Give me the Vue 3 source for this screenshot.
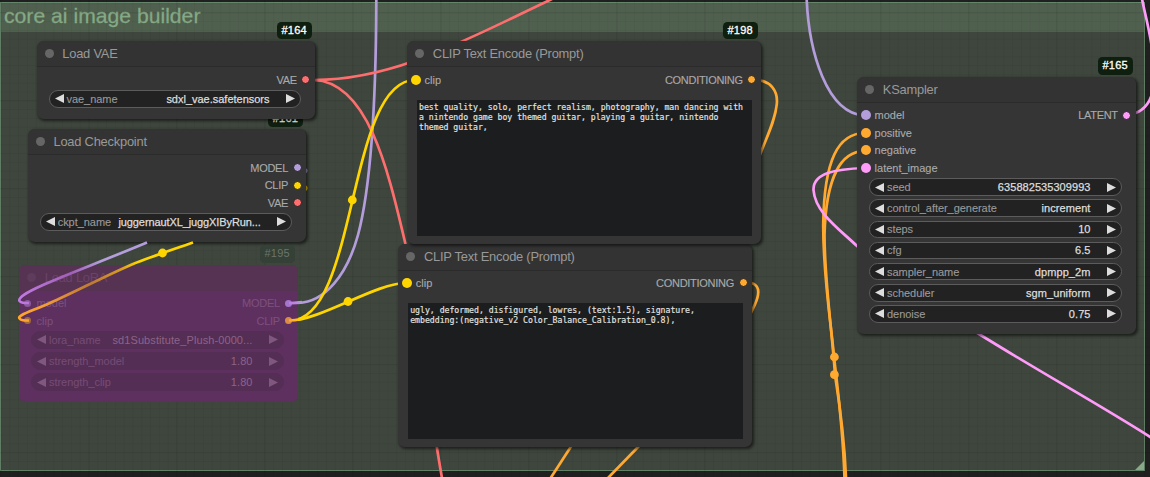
<script setup>
const C = { model: '#b39ddb', clip: '#ffd500', vae: '#ff6e6e', cond: '#ffa931', latent: '#ff9cf9' }

const nodes = [
  {
    cls: 'checkpoint', title: 'Load Checkpoint', badge: '#161',
    rows: [
      { out: ['MODEL', C.model] },
      { out: ['CLIP', C.clip] },
      { out: ['VAE', C.vae] },
    ],
    widgets: [['ckpt_name', 'juggernautXL_juggXIByRun...']],
  },
  {
    cls: 'vae', title: 'Load VAE', badge: '#164',
    rows: [{ out: ['VAE', C.vae] }],
    widgets: [['vae_name', 'sdxl_vae.safetensors']],
  },
  {
    cls: 'lora', title: 'Load LoRA', badge: '#195',
    rows: [
      { in: ['model', '#8a5a9c'], out: ['MODEL', '#a674cc'] },
      { in: ['clip', '#a06a3c'], out: ['CLIP', '#d88c48'] },
    ],
    widgets: [
      ['lora_name', 'sd1Substitute_Plush-0000...'],
      ['strength_model', '1.80'],
      ['strength_clip', '1.80'],
    ],
  },
  {
    cls: 'negative', title: 'CLIP Text Encode (Prompt)',
    rows: [{ in: ['clip', C.clip], out: ['CONDITIONING', C.cond] }],
    text: ['ugly, deformed, disfigured, lowres, (text:1.5), signature,', 'embedding:(negative_v2 Color_Balance_Calibration_0.8),'],
  },
  {
    cls: 'positive', title: 'CLIP Text Encode (Prompt)', badge: '#198',
    rows: [{ in: ['clip', C.clip], out: ['CONDITIONING', C.cond] }],
    text: ['best quality, solo, perfect realism, photography, man dancing with', 'a nintendo game boy themed guitar, playing a guitar, nintendo', 'themed guitar,'],
  },
  {
    cls: 'sampler', title: 'KSampler', badge: '#165',
    rows: [
      { in: ['model', C.model], out: ['LATENT', C.latent] },
      { in: ['positive', C.cond] },
      { in: ['negative', C.cond] },
      { in: ['latent_image', C.latent] },
    ],
    widgets: [
      ['seed', '635882535309993'],
      ['control_after_generate', 'increment'],
      ['steps', '10'],
      ['cfg', '6.5'],
      ['sampler_name', 'dpmpp_2m'],
      ['scheduler', 'sgm_uniform'],
      ['denoise', '0.75'],
    ],
  },
]

const isNumber = (v) => /^[\d.]+$/.test(v)
</script>

<template>
  <div class="canvas">
    <section class="group">
      <h1>core ai image builder</h1>
      <i class="resize"></i>
    </section>
    <div class="grid"></div>

    <svg class="links" viewBox="0 0 1150 477">
      <g fill="none" stroke-width="2.7">
        <g :stroke="C.model">
          <path d="M376.3 0C376 110 370 190 358 235C347 275 325 302 298 303" />
          <path d="M806.7 0C809 50 826 114 865 115.5" />
          <path d="M298 168C309 168 309 172 298 176" />
        </g>
        <g :stroke="C.vae">
          <path d="M314 80C395 80 465 40 552 -1" />
          <path d="M314 80C368 82 388 170 405 242C415 290 428 400 442 478" />
        </g>
        <g :stroke="C.clip">
          <path d="M290 320.5C358 320.5 347 80 415 80" />
          <path d="M290 320.5C320 320.5 376 283 406 283" />
          <path d="M298 185C309 185 309 190 298 194" />
        </g>
        <g :stroke="C.cond">
          <path d="M751 79.6C772 79 778 92 776.8 104C775 122 766 138 758 160" />
          <path d="M743 282.5C755 282 759.5 286 758 295C757 302 753 308 750 315" />
          <path d="M572 445L550 479M640 445L607 479" />
          <path d="M865 133C838 133 824 160 823.2 225C823.2 280 832 330 834 357C838 390 843 430 844.5 478" />
          <path d="M865 151C842 151 826 175 824.5 235C824.5 280 832 330 835 375C839 400 844.5 440 846 478" />
        </g>
        <g :stroke="C.latent">
          <path d="M865 168C835 169 813 173 813.5 190C815 212 838 228 857 246C900 285 940 310 979 334C1040 372 1100 405 1151 437.500" />
          <path d="M1142 -1C1145 14 1149 28 1152 48M1126 115C1139 114 1148 107 1152 94" />
        </g>
      </g>
      <circle cx="352.3" cy="200" r="4.4" :fill="C.clip" />
      <circle cx="348" cy="301.500" r="4.4" :fill="C.clip" />
      <circle cx="834.4" cy="357" r="4.400" :fill="C.cond" />
      <circle cx="834.4" cy="374.700" r="4.400" :fill="C.cond" />
    </svg>

    <article v-for="n in nodes" :key="n.cls" class="node" :class="n.cls">
      <span v-if="n.badge" class="badge">{{ n.badge }}</span>
      <header><i></i>{{ n.title }}</header>
      <div class="slots">
        <div v-for="(r, k) in n.rows" :key="k" class="slot">
          <span v-if="r.in" class="in"><i :style="{ background: r.in[1] }"></i>{{ r.in[0] }}</span>
          <span v-if="r.out" class="out">{{ r.out[0] }}<i :style="{ background: r.out[1] }"></i></span>
        </div>
      </div>
      <div v-if="n.widgets" class="widgets">
        <div v-for="w in n.widgets" :key="w[0]" class="widget">
          <svg class="arrow" viewBox="0 0 9 9"><path d="M0 4.500L9 0V9Z" /></svg>
          <span class="label">{{ w[0] }}</span>
          <span class="value" :class="{ num: isNumber(w[1]) }">{{ w[1] }}</span>
          <svg class="arrow" viewBox="0 0 9 9"><path d="M9 4.500L0 0V9Z" /></svg>
        </div>
      </div>
      <div v-if="n.text" class="prompt">
        <div v-for="t in n.text" :key="t">{{ t }}</div>
      </div>
    </article>

    <svg class="links top" viewBox="0 0 1150 477">
      <defs>
        <linearGradient id="lm" gradientUnits="userSpaceOnUse" x1="19" y1="0" x2="100" y2="0">
          <stop offset="0" stop-color="#c07be2" /><stop offset="0.65" stop-color="#9f60b6" /><stop offset="1" stop-color="#b39ddb" />
        </linearGradient>
        <linearGradient id="lc" gradientUnits="userSpaceOnUse" x1="19" y1="0" x2="138" y2="0">
          <stop offset="0" stop-color="#ffa62e" /><stop offset="0.25" stop-color="#f09a35" /><stop offset="0.6" stop-color="#bd7a35" /><stop offset="0.85" stop-color="#d59a25" /><stop offset="1" stop-color="#ffd500" />
        </linearGradient>
        <linearGradient id="om" gradientUnits="userSpaceOnUse" x1="289" y1="0" x2="303" y2="0">
          <stop offset="0" stop-color="#bd7be4" /><stop offset="1" stop-color="#b39ddb" />
        </linearGradient>
        <linearGradient id="oc" gradientUnits="userSpaceOnUse" x1="289" y1="0" x2="301" y2="0">
          <stop offset="0" stop-color="#ffa035" /><stop offset="1" stop-color="#ffd500" />
        </linearGradient>
      </defs>
      <g fill="none" stroke-width="2.7">
        <path stroke="url(#lm)" d="M147 242.500C100 262 60 277 43 285C25 293 18 298 19.500 301C20.500 303 24 303 29 303" />
        <path stroke="url(#lc)" d="M193 242.500C160 254 145 259 133 264C105 276 75 292 50 303C27 313 17.500 315.500 19.500 318.500C20.500 320.500 24 320.500 29 320.500" />
        <path stroke="url(#om)" d="M289 303C293 303.100 297 303 302 302.200" />
        <path stroke="url(#oc)" d="M289 320.500C293 320.500 297 320 301 319" />
      </g>
      <circle cx="162.500" cy="253" r="4.400" :fill="C.clip" />
    </svg>
  </div>
</template>

<style>
body { margin: 0; background: #202020; overflow: hidden; }
</style>

<style scoped>
.canvas {
  position: relative; width: 1150px; height: 477px; overflow: hidden;
  background: #202020; font-family: "Liberation Sans", Arial, sans-serif;
}
.grid {
  position: absolute; inset: 0;
  background-image:
    linear-gradient(90deg, rgba(0,0,0,.07) 1px, transparent 1px),
    linear-gradient(rgba(0,0,0,.07) 1px, transparent 1px),
    linear-gradient(90deg, rgba(0,0,0,.04) 1px, transparent 1px),
    linear-gradient(rgba(0,0,0,.04) 1px, transparent 1px);
  background-size: 88px 88px, 88px 88px, 8.8px 8.8px, 8.8px 8.8px;
  background-position: .5px 0, 0 12.300px, .5px 0, 0 12.300px;
}
.group {
  position: absolute; left: 0; top: 2px; width: 1145px; height: 469px; box-sizing: border-box;
  border: 1.500px solid #64866a; background: #3e463d;
}
.group h1 {
  margin: 0; height: 29px; padding-left: 3px; background: #50604f; color: #86aa86;
  font-size: 21.100px; font-weight: 400; line-height: 26px; letter-spacing: .03px; white-space: nowrap;
  -webkit-text-stroke: .3px #86aa86;
}
.resize {
  position: absolute; right: 0; bottom: 0; width: 9px; height: 9px; background: #88aa88;
  clip-path: polygon(100% 0, 100% 100%, 0 100%);
}
.links { position: absolute; left: 0; top: 0; width: 1150px; height: 477px; }
.node {
  position: absolute; box-sizing: border-box; display: flex; flex-direction: column;
  background: #353535; border-radius: 7px; box-shadow: 1.500px 1.500px 3px rgba(0,0,0,.55);
}
.vae { left: 36.500px; top: 41px; width: 278.500px; height: 77.500px; }
.checkpoint { left: 27.700px; top: 129px; width: 278.500px; height: 113px; }
.lora { left: 19px; top: 264.500px; width: 279px; height: 137.500px; }
.positive { left: 407px; top: 41px; width: 354px; height: 202.500px; }
.negative { left: 398.200px; top: 244.200px; width: 354px; height: 202.500px; }
.sampler { left: 857px; top: 76.500px; width: 279px; height: 257.500px; }
header {
  flex: none; box-sizing: border-box; height: 26.400px; padding-left: 8.300px; display: flex; align-items: center; gap: 8.500px;
  background: #333; border-bottom: 1px solid #2b2b2b; border-radius: 7px 7px 0 0;
  color: #999; font-size: 12.900px; letter-spacing: -.23px; white-space: nowrap;
}
header i { width: 9px; height: 9px; border-radius: 50%; background: #666; }
.badge {
  position: absolute; right: 3.300px; top: -19.500px; width: 35px; height: 17.500px; border-radius: 4.500px;
  background: #0f1f0f; color: #fff; font-size: 11px; line-height: 17.500px; text-align: center; letter-spacing: .25px;
  -webkit-text-stroke: .3px #fff;
}
.slots { padding: 3.500px 4.700px 0 4px; }
.slot { height: 17.600px; display: flex; justify-content: space-between; align-items: center; color: #aaa; font-size: 11px; -webkit-text-stroke: .12px; }
.slot span { display: flex; align-items: center; gap: 4.600px; letter-spacing: 0; }
.slot .out { margin-left: auto; gap: 4.500px; letter-spacing: -.28px; }
.slot i { width: 7px; height: 7px; border-radius: 50%; border: 1px solid #222; }
.slot .in i { border-color: transparent; background-clip: padding-box; width: 8px; height: 8px; margin: 0 -.5px; }
.widgets { display: flex; flex-direction: column; gap: 3.550px; padding: 1.500px 14.200px 0 12.400px; }
.widget {
  box-sizing: border-box; height: 17.600px; border: 1px solid #5c5c5c; border-radius: 9px; background: #222;
  display: flex; align-items: center; padding: 0 4.800px; font-size: 11px; white-space: nowrap;
}
.arrow { width: 9px; height: 9px; fill: #ddd; flex: none; }
.label { color: #999; margin-left: 2.800px; letter-spacing: -.04px; -webkit-text-stroke: .12px; }
.value { color: #ddd; margin-left: auto; margin-right: 16.500px; letter-spacing: .09px; -webkit-text-stroke: .25px #ddd; }
.value.num { letter-spacing: .06px; }
.vae .value { letter-spacing: -.01px; }
.checkpoint .value { letter-spacing: -.1px; }
.prompt {
  margin: 11.700px 9px 7.500px 10px; flex: 1; background: #1c1d1e; color: #e4e4e0; padding: 1.500px 2px;
  font: 8.200px/10.100px "DejaVu Sans Mono", monospace; letter-spacing: -.02px; white-space: nowrap;
  -webkit-text-stroke: .15px #e4e4e0;
}
.lora { background: #5e3060; box-shadow: none; }
.lora header { background: #563253; border-color: transparent; color: #6c4269; }
.lora header i { background: #5e3c5b; }
.lora .badge { background: #354037; color: #6b756b; -webkit-text-stroke: 0; }
.lora .slot { color: #7b4f7c; }
.lora .slot i { box-sizing: border-box; width: 7px; height: 7px; margin: 0 1px; border-color: transparent; background-clip: padding-box; }
.lora .widget { background: #542e54; border-color: #542e54; }
.lora .arrow { fill: #80577f; }
.lora .label { color: #754b75; }
.lora .value { color: #8c638b; -webkit-text-stroke: 0; }
</style>
